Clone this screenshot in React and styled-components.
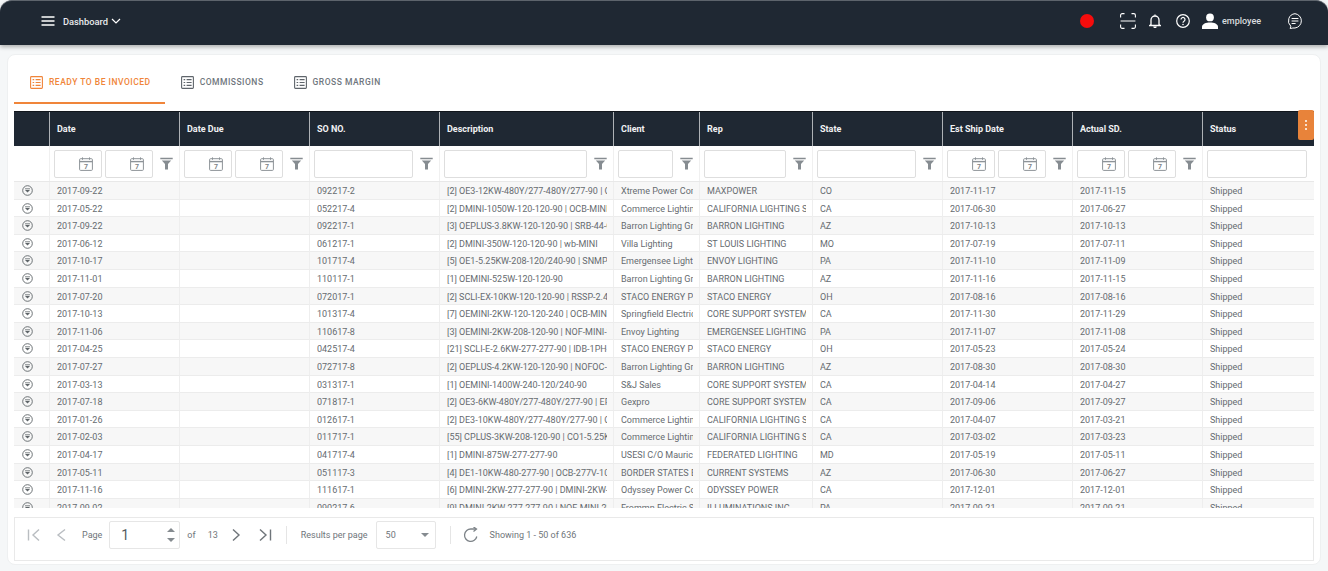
import React from "react";
import styled, { createGlobalStyle } from "styled-components";

const GlobalStyle = createGlobalStyle`
  html, body {
    margin: 0;
    padding: 0;
    height: 571px;
    overflow: hidden;
    background: #f5f7f8;
    font-family: Roboto, "Liberation Sans", sans-serif;
  }
  * { box-sizing: border-box; }
`;

const COLUMNS = "35px 130px 130px 130px 174px 86px 113px 130px 130px 130px 112px";

const rows = [
  ["2017-09-22", "092217-2", "[2] OE3-12KW-480Y/277-480Y/277-90 | OCB-277V", "Xtreme Power Conversion", "MAXPOWER", "CO", "2017-11-17", "2017-11-15"],
  ["2017-05-22", "052217-4", "[2] DMINI-1050W-120-120-90 | OCB-MINI-120V", "Commerce Lighting", "CALIFORNIA LIGHTING SALES", "CA", "2017-06-30", "2017-06-27"],
  ["2017-09-22", "092217-1", "[3] OEPLUS-3.8KW-120-120-90 | SRB-44-OEPLUS", "Barron Lighting Group", "BARRON LIGHTING", "AZ", "2017-10-13", "2017-10-13"],
  ["2017-06-12", "061217-1", "[2] DMINI-350W-120-120-90 | wb-MINI", "Villa Lighting", "ST LOUIS LIGHTING", "MO", "2017-07-19", "2017-07-11"],
  ["2017-10-17", "101717-4", "[5] OE1-5.25KW-208-120/240-90 | SNMP-CARD", "Emergensee Lighting", "ENVOY LIGHTING", "PA", "2017-11-10", "2017-11-09"],
  ["2017-11-01", "110117-1", "[1] OEMINI-525W-120-120-90", "Barron Lighting Group", "BARRON LIGHTING", "AZ", "2017-11-16", "2017-11-15"],
  ["2017-07-20", "072017-1", "[2] SCLI-EX-10KW-120-120-90 | RSSP-2.4KW", "STACO ENERGY PRODUCTS", "STACO ENERGY", "OH", "2017-08-16", "2017-08-16"],
  ["2017-10-13", "101317-4", "[7] OEMINI-2KW-120-120-240 | OCB-MINI-120V", "Springfield Electric", "CORE SUPPORT SYSTEMS", "CA", "2017-11-30", "2017-11-29"],
  ["2017-11-06", "110617-8", "[3] OEMINI-2KW-208-120-90 | NOF-MINI-2KW", "Envoy Lighting", "EMERGENSEE LIGHTING", "PA", "2017-11-07", "2017-11-08"],
  ["2017-04-25", "042517-4", "[21] SCLI-E-2.6KW-277-277-90 | IDB-1PH-277V", "STACO ENERGY PRODUCTS", "STACO ENERGY", "OH", "2017-05-23", "2017-05-24"],
  ["2017-07-27", "072717-8", "[2] OEPLUS-4.2KW-120-120-90 | NOFOC-PLUS", "Barron Lighting Group", "BARRON LIGHTING", "AZ", "2017-08-30", "2017-08-30"],
  ["2017-03-13", "031317-1", "[1] OEMINI-1400W-240-120/240-90", "S&J Sales", "CORE SUPPORT SYSTEMS", "CA", "2017-04-14", "2017-04-27"],
  ["2017-07-18", "071817-1", "[2] OE3-6KW-480Y/277-480Y/277-90 | EPO-SW", "Gexpro", "CORE SUPPORT SYSTEMS", "CA", "2017-09-06", "2017-09-27"],
  ["2017-01-26", "012617-1", "[2] DE3-10KW-480Y/277-480Y/277-90 | OCB-277V", "Commerce Lighting", "CALIFORNIA LIGHTING SALES", "CA", "2017-04-07", "2017-03-21"],
  ["2017-02-03", "011717-1", "[55] CPLUS-3KW-208-120-90 | CO1-5.25KW", "Commerce Lighting", "CALIFORNIA LIGHTING SALES", "CA", "2017-03-02", "2017-03-23"],
  ["2017-04-17", "041717-4", "[1] DMINI-875W-277-277-90", "USESI C/O Maurice Electric", "FEDERATED LIGHTING", "MD", "2017-05-19", "2017-05-11"],
  ["2017-05-11", "051117-3", "[4] DE1-10KW-480-277-90 | OCB-277V-10KW", "BORDER STATES ELECTRIC", "CURRENT SYSTEMS", "AZ", "2017-06-30", "2017-06-27"],
  ["2017-11-16", "111617-1", "[6] DMINI-2KW-277-277-90 | DMINI-2KW-BATT", "Odyssey Power Corp", "ODYSSEY POWER", "CA", "2017-12-01", "2017-12-01"],
  ["2017-09-02", "090217-6", "[9] DMINI-2KW-277-277-90 | NOF-MINI-2KW", "Frommn Electric Supply", "ILLUMINATIONS INC", "PA", "2017-09-21", "2017-09-21"],
];

const filters = [
  { date: true },
  { date: true },
  {},
  {},
  {},
  {},
  {},
  { date: true },
  { date: true },
  { noFunnel: true },
];

const heads = ["Date", "Date Due", "SO NO.", "Description", "Client", "Rep", "State", "Est Ship Date", "Actual SD.", "Status"];

const TopBar = styled.header`
  height: 45px;
  background: #1f2833;
  border-radius: 12px 12px 0 0;
  border-top: 1px solid #5d646c;
  box-shadow: 0 2px 4px rgba(0, 0, 0, 0.3);
  display: flex;
  align-items: center;
  padding: 0 25px 4px 41px;
  color: #fff;
`;

const NavTitle = styled.span`
  font-size: 9.3px;
  font-weight: 500;
  color: #e8eaec;
  margin-left: 8px;
`;

const BarIcons = styled.div`
  margin-left: auto;
  display: flex;
  align-items: center;
`;

const RecDot = styled.span`
  width: 14px;
  height: 14px;
  border-radius: 50%;
  background: #f50c0c;
  margin-right: 26px;
`;

const UserName = styled.span`
  font-size: 9px;
  font-weight: 500;
  color: #d9dcdf;
  margin: 0 25px 0 4px;
  width: 40px;
`;

const Card = styled.main`
  margin: 9px 7px 0;
  height: 511px;
  background: #fff;
  border-radius: 8px;
  border: 1px solid #eef0f1;
  padding: 13px 6px 0;
`;

const Tabs = styled.nav`
  display: flex;
  height: 36px;
`;

const Tab = styled.div`
  display: flex;
  align-items: center;
  gap: 6px;
  height: 36px;
  padding: 0 14px 6px 16px;
  font-size: 8.5px;
  font-weight: 500;
  letter-spacing: 0.5px;
  text-transform: uppercase;
  color: ${(p) => (p.$active ? "#f0853a" : "#6f767d")};
  border-bottom: 2px solid ${(p) => (p.$active ? "#f0853a" : "transparent")};
`;

const GridWrap = styled.section`
  position: relative;
  margin-top: 7px;
  width: 1300px;
`;

const HeadRow = styled.div`
  display: grid;
  grid-template-columns: ${COLUMNS};
  height: 35px;
  background: #1f2833;
  border-top: 1px solid #11161c;
`;

const HeadCell = styled.div`
  display: flex;
  align-items: center;
  padding-left: 7px;
  font-size: 9px;
  font-weight: 700;
  color: #f1f2f3;
  border-left: ${(p) => (p.$first ? "none" : "1px solid #aeb2b6")};
`;

const FilterRow = styled.div`
  display: grid;
  grid-template-columns: ${COLUMNS};
  height: 36px;
  background: #fff;
  border-bottom: 1px solid #e8e8e8;
`;

const FilterCell = styled.div`
  display: flex;
  align-items: center;
  gap: 3px;
  padding: 0 ${(p) => (p.$noFunnel ? "7px" : "6px")} 0 4px;
  border-left: ${(p) => (p.$first ? "none" : "1px solid #f0f0f0")};
`;

const TextFilter = styled.input`
  flex: 1;
  min-width: 0;
  height: 28px;
  border: 1px solid #dedede;
  border-radius: 2px;
  background: #fff;
  outline: none;
`;

const DateFilter = styled.div`
  flex: 1;
  height: 28px;
  display: flex;
  align-items: center;
  justify-content: flex-end;
  padding-right: 8px;
  border: 1px solid #dedede;
  border-radius: 2px;
`;

const FunnelSlot = styled.span`
  display: flex;
  margin-left: 4px;
`;

const Body = styled.div`
  height: 326px;
  overflow: hidden;
`;

const Row = styled.div`
  display: grid;
  grid-template-columns: ${COLUMNS};
  height: 17.6px;
  background: ${(p) => (p.$odd ? "#f7f7f7" : "#fff")};
  border-bottom: 1px solid #ececec;
`;

const Cell = styled.div`
  min-width: 0;
  padding: 0 6px 0 7px;
  border-left: 1px solid #eeeeee;
`;

const CellText = styled.div`
  font-size: 9px;
  line-height: 19px;
  height: 17px;
  color: #666b70;
  white-space: nowrap;
  overflow: hidden;
`;

const ExpandCell = styled.div`
  display: flex;
  padding: 3px 0 0 8px;
`;

const MenuButton = styled.button`
  position: absolute;
  top: -1px;
  right: 0;
  width: 16px;
  height: 30px;
  padding: 0;
  border: none;
  border-radius: 2px;
  background: #e8833a;
  color: #fff;
  display: flex;
  flex-direction: column;
  align-items: center;
  justify-content: center;
  gap: 2px;
`;

const Dot = styled.i`
  width: 2px;
  height: 2px;
  border-radius: 50%;
  background: #fff;
`;

const Pager = styled.footer`
  margin-top: 9px;
  width: 1300px;
  height: 44px;
  border: 1px solid #e9e9e9;
  display: flex;
  align-items: flex-start;
  padding: 3px 0 0 12px;
  font-size: 9px;
  color: #6f757a;
`;

const PagerGroup = styled.div`
  display: flex;
  align-items: center;
  height: 28px;
  margin-left: ${(p) => p.$ml || 0}px;
`;

const PageBox = styled.div`
  width: 71px;
  height: 28px;
  margin: 0 7px;
  border: 1px solid #e6e6e6;
  border-radius: 2px;
  display: flex;
  align-items: center;
  justify-content: space-between;
  padding: 0 4px 0 11px;
  font-size: 14px;
  color: #555b60;
`;

const Spinner = styled.span`
  display: flex;
  flex-direction: column;
  gap: 6px;
`;

const Arrow = styled.i`
  width: 0;
  height: 0;
  border-left: 4px solid transparent;
  border-right: 4px solid transparent;
  border-${(p) => (p.$up ? "bottom" : "top")}: 4px solid #858b90;
`;

const SelectBox = styled.div`
  width: 60px;
  height: 28px;
  margin-left: 8px;
  border: 1px solid #e6e6e6;
  border-radius: 2px;
  display: flex;
  align-items: center;
  justify-content: space-between;
  padding: 0 6px 0 9px;
`;

const Divider = styled.span`
  width: 1px;
  height: 18px;
  background: #e5e5e5;
  margin: 0 ${(p) => p.$right}px 0 14px;
`;

const Muted = styled.span`
  margin-left: ${(p) => p.$ml || 0}px;
`;

const PagerSvg = styled.svg`
  flex: none;
  margin-left: ${(p) => p.$ml || 0}px;
`;

const ListIcon = ({ color }) => (
  <svg width="13" height="13" viewBox="0 0 13 13" fill="none" stroke={color} strokeWidth="1.1">
    <rect x="0.6" y="0.6" width="11.8" height="11.8" rx="0.8" />
    <path d="M2.6 3.6h1.6M5.6 3.6h5M2.6 6.5h1.6M5.6 6.5h5M2.6 9.4h1.6M5.6 9.4h5" />
  </svg>
);

const CalendarIcon = () => (
  <svg width="14" height="14" viewBox="0 0 14 14" fill="none">
    <rect x="0.6" y="1.7" width="12.8" height="11.7" rx="1" stroke="#8d9398" strokeWidth="1" />
    <path d="M0.6 4.6h12.8" stroke="#8d9398" strokeWidth="1.4" />
    <path d="M3.5 0.4v2.4M10.5 0.4v2.4" stroke="#8d9398" strokeWidth="1" />
    <text x="7" y="11.6" fontSize="7" fontWeight="700" fontFamily="Roboto, sans-serif" fill="#7c8287" textAnchor="middle">7</text>
  </svg>
);

const FunnelIcon = () => (
  <svg width="13" height="13" viewBox="0 0 13 13">
    <path d="M0.3 0.8h12.4v1.5H0.3zM1.8 3.4h9.4L8 7v5.6H5V7z" fill="#868c91" />
  </svg>
);

const ExpandIcon = () => (
  <svg width="11" height="11" viewBox="0 0 11 11" fill="none">
    <circle cx="5.5" cy="5.5" r="4.8" stroke="#5e6468" strokeWidth="0.9" />
    <path d="M3 3.8h5" stroke="#5e6468" strokeWidth="0.8" />
    <path d="M3 5h5L5.5 7.6z" fill="#5e6468" />
  </svg>
);

const PagerLine = ({ d, color = "#8e9499", ml }) => (
  <PagerSvg $ml={ml} width="14" height="14" viewBox="0 0 14 14" fill="none" stroke={color} strokeWidth="1.4">
    <path d={d} />
  </PagerSvg>
);

export default function App() {
  return (
    <>
      <GlobalStyle />
      <TopBar>
        <svg width="14" height="10" viewBox="0 0 14 10" stroke="#fff" strokeWidth="1.3">
          <path d="M0.5 1h13M0.5 5h13M0.5 9h13" />
        </svg>
        <NavTitle>Dashboard</NavTitle>
        <svg width="10" height="6" viewBox="0 0 10 6" fill="none" stroke="#fff" strokeWidth="1.2" style={{ marginLeft: 3 }}>
          <path d="M1 1l4 4 4-4" />
        </svg>
        <BarIcons>
          <RecDot />
          <svg width="16" height="16" viewBox="0 0 16 16" fill="none" stroke="#fff" strokeWidth="1.1" style={{ marginRight: 13 }}>
            <path d="M0.6 4.5V2.2A1.6 1.6 0 0 1 2.2 0.6h2.3M11.5 0.6h2.3a1.6 1.6 0 0 1 1.6 1.6v2.3M15.4 11.5v2.3a1.6 1.6 0 0 1-1.6 1.6h-2.3M4.5 15.4H2.2a1.6 1.6 0 0 1-1.6-1.6v-2.3M0.6 8h14.8" />
          </svg>
          <svg width="12" height="14" viewBox="0 0 12 14" fill="none" stroke="#fff" strokeWidth="1.3" style={{ marginRight: 15 }}>
            <path d="M2 10.5V6a4 4 0 0 1 8 0v4.5l1.2 1H0.8zM6 0.4v1.4" />
            <path d="M4.7 12.6a1.4 1.4 0 0 0 2.6 0" />
          </svg>
          <svg width="14" height="14" viewBox="0 0 14 14" fill="none" style={{ marginRight: 12 }}>
            <circle cx="7" cy="7" r="6.3" stroke="#fff" strokeWidth="1.2" />
            <path d="M5 5.4a2 2 0 1 1 3 1.8c-.7.4-1 .8-1 1.6" stroke="#fff" strokeWidth="1.2" />
            <circle cx="7" cy="10.5" r="0.8" fill="#fff" />
          </svg>
          <svg width="16" height="16" viewBox="0 0 16 16" fill="#fff">
            <circle cx="8" cy="4.4" r="3.9" />
            <path d="M0 16v-2.2C0 11 4 9.5 8 9.5s8 1.5 8 4.3V16z" />
          </svg>
          <UserName>employee</UserName>
          <svg width="16" height="16" viewBox="0 0 16 16" fill="none" stroke="#fff" strokeWidth="1">
            <path d="M8 0.7a7.2 7.2 0 0 1 0 14.3c-1.400 0-2.700-.1-4.800.5l.6-2.300A7.200 7.200 0 0 1 8 .7z" />
            <path d="M4.600 5.500h6.800M4.600 8h6.800M4.600 10.500h4" />
          </svg>
        </BarIcons>
      </TopBar>

      <Card>
        <Tabs>
          <Tab $active>
            <ListIcon color="#f0853a" />
            Ready to be invoiced
          </Tab>
          <Tab>
            <ListIcon color="#5f656b" />
            Commissions
          </Tab>
          <Tab>
            <ListIcon color="#5f656b" />
            Gross Margin
          </Tab>
        </Tabs>

        <GridWrap>
          <HeadRow>
            <HeadCell $first />
            {heads.map((h) => (
              <HeadCell key={h}>{h}</HeadCell>
            ))}
          </HeadRow>

          <FilterRow>
            <FilterCell $first />
            {filters.map((f, i) => (
              <FilterCell key={i} $noFunnel={f.noFunnel}>
                {f.date ? (
                  <>
                    <DateFilter>
                      <CalendarIcon />
                    </DateFilter>
                    <DateFilter>
                      <CalendarIcon />
                    </DateFilter>
                  </>
                ) : (
                  <TextFilter />
                )}
                {!f.noFunnel && (
                  <FunnelSlot>
                    <FunnelIcon />
                  </FunnelSlot>
                )}
              </FilterCell>
            ))}
          </FilterRow>

          <Body>
            {rows.map((r, i) => (
              <Row key={r[1]} $odd={i % 2 === 0}>
                <ExpandCell>
                  <ExpandIcon />
                </ExpandCell>
                <Cell><CellText>{r[0]}</CellText></Cell>
                <Cell />
                <Cell><CellText>{r[1]}</CellText></Cell>
                <Cell><CellText>{r[2]}</CellText></Cell>
                <Cell><CellText>{r[3]}</CellText></Cell>
                <Cell><CellText>{r[4]}</CellText></Cell>
                <Cell><CellText>{r[5]}</CellText></Cell>
                <Cell><CellText>{r[6]}</CellText></Cell>
                <Cell><CellText>{r[7]}</CellText></Cell>
                <Cell><CellText>Shipped</CellText></Cell>
              </Row>
            ))}
          </Body>

          <MenuButton aria-label="Grid menu">
            <Dot />
            <Dot />
            <Dot />
          </MenuButton>
        </GridWrap>

        <Pager>
          <PagerGroup>
            <PagerLine d="M1.5 1.500v11M12 1.500L6 7l6 5.500" color="#b9bdc1" />
            <PagerLine d="M11 1.500L4 7l7 5.500" color="#b9bdc1" ml={13} />
          </PagerGroup>
          <PagerGroup $ml={14}>
            <span>Page</span>
            <PageBox>
              1
              <Spinner>
                <Arrow $up />
                <Arrow />
              </Spinner>
            </PageBox>
            <span>of</span>
            <Muted $ml={12}>13</Muted>
            <PagerLine d="M3 1.500L9 7l-6 5.500" color="#6f757a" ml={12} />
            <PagerLine d="M2 1.500L8 7l-6 5.500M12.500 1.500v11" color="#6f757a" ml={14} />
            <Divider $right={14} />
          </PagerGroup>
          <PagerGroup>
            <span>Results per page</span>
            <SelectBox>
              50
              <Arrow />
            </SelectBox>
            <Divider $right={12} />
          </PagerGroup>
          <PagerGroup>
            <svg width="16" height="16" viewBox="0 0 16 16" fill="none" stroke="#7d8388" strokeWidth="1.3">
              <path d="M13.800 9.500A6.200 6.200 0 1 1 8 2h5" />
              <path d="M10.500 0l3 2-3 2.500" />
            </svg>
            <Muted $ml={11}>Showing 1 - 50 of 636</Muted>
          </PagerGroup>
        </Pager>
      </Card>
    </>
  );
}
